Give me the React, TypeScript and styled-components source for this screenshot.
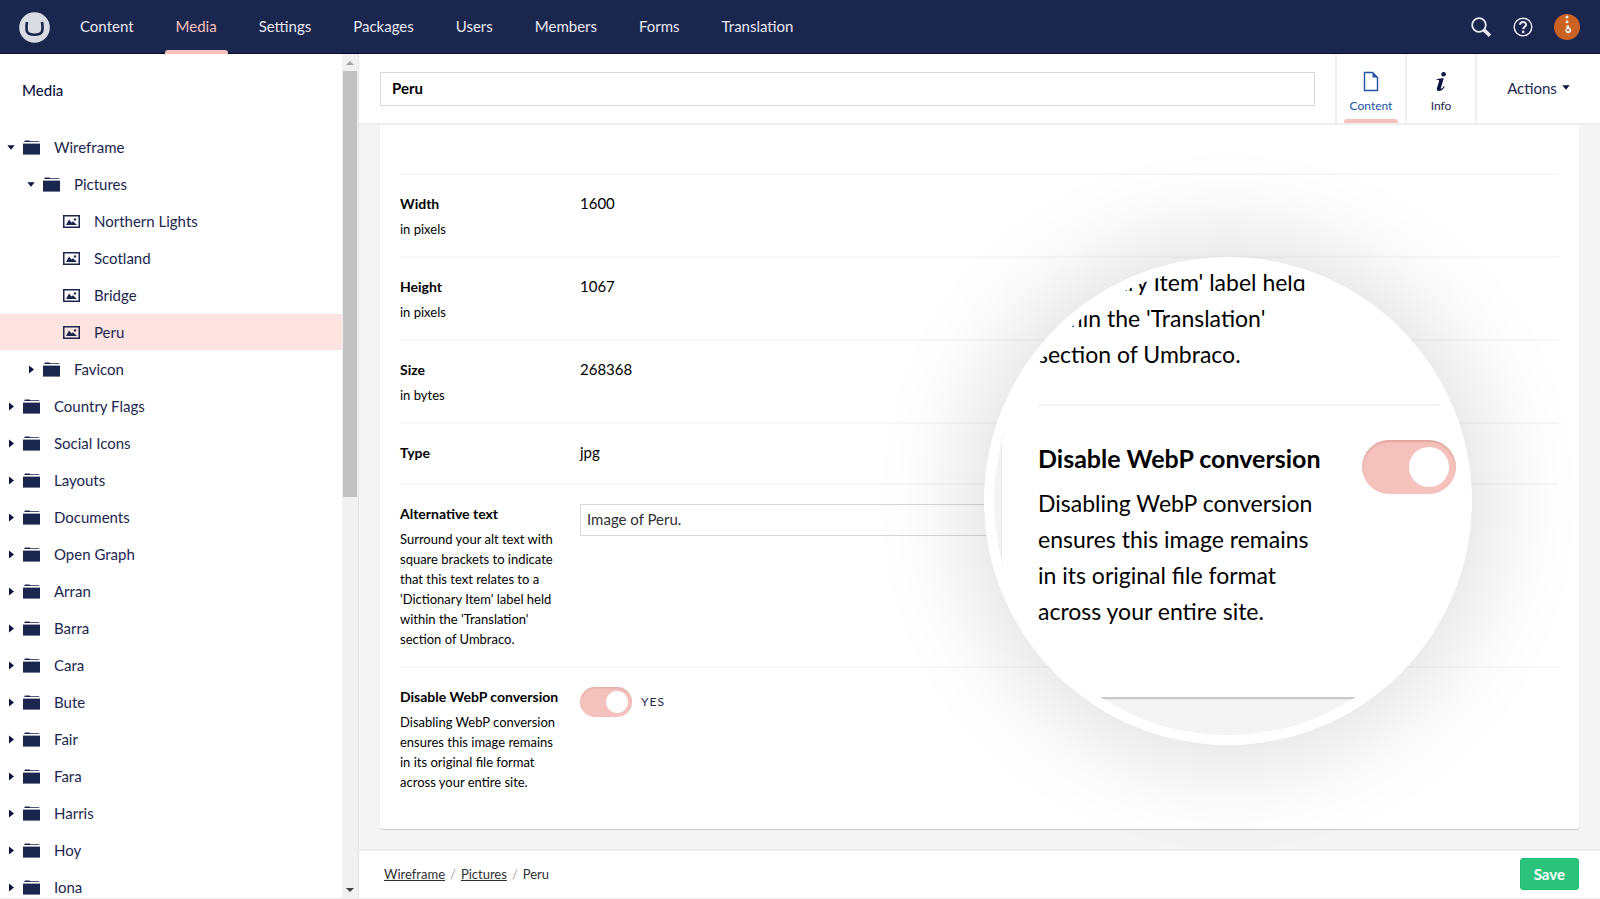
import React from "react";
import styled, { createGlobalStyle } from "styled-components";

const GlobalStyle = createGlobalStyle`
  *, *::before, *::after { box-sizing: border-box; }
  body {
    margin: 0;
    background: #f4f4f4;
    color: #000;
    font-family: Lato, "Liberation Sans", sans-serif;
    font-size: 15px;
    line-height: 20px;
  }
  button, input { font: inherit; }
  svg { flex: none; }
`;

const navy = "#1b264f";
const rose = "#f5c1bc";

const Shell = styled.div`
  display: flex;
  flex-direction: column;
  height: 100vh;
  overflow: hidden;
  border-bottom: 1px solid #ededed;
`;

const TopBar = styled.header`
  display: flex;
  flex: none;
  align-items: center;
  height: 54px;
  padding: 0 20px 0 19px;
  background: ${navy};
  box-shadow: inset 0 -1px 0 #050b33;
`;

const LogoLink = styled.a`
  display: flex;
  margin-right: 19px;
`;

const Sections = styled.nav`
  display: flex;
  flex: 1;
  align-self: stretch;
  gap: 20px;
`;

const SectionLink = styled.a<{ $active?: boolean }>`
  display: flex;
  flex-direction: column;
  align-items: center;
  justify-content: space-between;
  padding-top: 1px;
  color: ${(p) => (p.$active ? rose : "#e6e8ef")};
  text-decoration: none;

  &::before { content: ""; }

  &::after {
    content: "";
    align-self: stretch;
    height: 4px;
    border-radius: 3px 3px 0 0;
    background: ${(p) => (p.$active ? rose : "transparent")};
  }
`;

const SectionName = styled.span`
  padding: 0 11px;
`;

const Tools = styled.div`
  display: flex;
  align-items: center;
  gap: 21px;
`;

const IconButton = styled.button`
  display: flex;
  padding: 0;
  border: 0;
  background: none;
  color: #e6e8ef;
`;

const Body = styled.div`
  display: flex;
  flex: 1;
  min-height: 0;
`;

const Sidebar = styled.aside`
  display: flex;
  flex: none;
  width: 359px;
  background: #fff;
  border-right: 1px solid #e4e4e6;
  color: ${navy};
`;

const TreePane = styled.div`
  flex: 1;
  overflow: hidden;
`;

const TreeTitle = styled.h2`
  margin: 0;
  padding: 26px 22px 29px;
  font-size: 15px;
  font-weight: 500;
  line-height: 20px;
  color: #0c1442;
`;

const Tree = styled.ul`
  margin: 0;
  padding: 0;
  list-style: none;
`;

const TreeRow = styled.li<{ $depth: number; $selected?: boolean }>`
  display: flex;
  align-items: center;
  height: 36px;
  margin-bottom: 1px;
  padding-left: ${(p) => 7 + p.$depth * 20}px;
  background: ${(p) => (p.$selected ? "#fee4e1" : "transparent")};
`;

const Caret = styled.span`
  display: flex;
  width: 16px;
`;

const TreeLink = styled.a`
  display: flex;
  align-items: center;
  gap: 14px;
  color: inherit;
  text-decoration: none;
`;

const Scrollbar = styled.div`
  display: flex;
  flex-direction: column;
  width: 16px;
  background: #f1f1f1;
`;

const ScrollArrow = styled.span`
  display: flex;
  flex: none;
  align-items: center;
  justify-content: center;
  height: 17px;
`;

const ScrollTrack = styled.div`
  flex: 1;
  padding: 0 1px;
`;

const ScrollThumb = styled.div`
  height: 52.6%;
  background: #c1c1c1;
`;

const Editor = styled.form`
  display: flex;
  flex: 1;
  flex-direction: column;
  min-width: 0;
`;

const EditorHeader = styled.div`
  display: flex;
  flex: none;
  align-items: center;
  height: 71px;
  padding-left: 21px;
  background: #fff;
  border-bottom: 2px solid #efeff0;
`;

const NameInput = styled.input`
  flex: 1;
  min-width: 0;
  height: 34px;
  margin-right: 20px;
  padding: 0 11px 2px;
  border: 1px solid #d8d7d9;
  background: #fff;
  color: #000;
  font-weight: 700;
`;

const TabButton = styled.button<{ $active?: boolean }>`
  display: flex;
  flex-direction: column;
  align-items: center;
  align-self: stretch;
  width: 70px;
  padding: 17px 0 0;
  border: 0;
  border-left: 2px solid #efeff0;
  background: none;
  color: ${(p) => (p.$active ? "#2152a3" : navy)};
  font-size: 12px;
  line-height: 20px;

  svg { margin-bottom: 4px; }

  &::after {
    content: "";
    width: 54px;
    height: 4px;
    margin-top: auto;
    border-radius: 3px 3px 0 0;
    background: ${(p) => (p.$active ? rose : "transparent")};
  }
`;

const ActionsButton = styled.button`
  display: flex;
  align-items: center;
  align-self: stretch;
  justify-content: center;
  gap: 5px;
  width: 125px;
  padding: 0 0 2px;
  border: 0;
  border-left: 2px solid #efeff0;
  background: none;
  color: ${navy};
`;

const Canvas = styled.main`
  flex: 1;
  min-height: 0;
  overflow: hidden;
  padding: 0 21px 20px;
`;

const Card = styled.section`
  height: 100%;
  padding: 48px 20px 0;
  background: #fff;
  border-radius: 0 0 3px 3px;
  box-shadow: 0 1px 1px rgba(0, 0, 0, 0.18);
`;

const Property = styled.div`
  display: grid;
  grid-template-columns: 160px 1fr;
  column-gap: 20px;
  padding: 18px 0 17px;
  border-top: 2px solid #f8f8f8;
`;

const PropertyLabel = styled.label`
  display: block;
  font-size: 14px;
  font-weight: 700;
  line-height: 22px;
  white-space: nowrap;
`;

const Description = styled.p`
  margin: 4px 0 0;
  font-size: 13px;
  line-height: 20px;
`;

const Value = styled.div`
  min-height: 24px;
  line-height: 20px;
`;

const Control = styled.div`
  padding-top: 1px;
`;

const TextInput = styled.input`
  display: block;
  width: 100%;
  max-width: 800px;
  height: 32px;
  padding: 0 6px 2px;
  border: 1px solid #d8d7d9;
  background: #fff;
  color: #303033;
`;

const ToggleLine = styled.div`
  display: flex;
  align-items: center;
  gap: 9px;
  color: ${navy};
  font-size: 12px;
  letter-spacing: 1px;
`;

const Toggle = styled.input<{ $large?: boolean }>`
  display: flex;
  flex: none;
  align-items: center;
  justify-content: flex-end;
  appearance: none;
  width: ${(p) => (p.$large ? 94 : 52)}px;
  height: ${(p) => (p.$large ? 54 : 30)}px;
  margin: 0;
  padding: 0 ${(p) => (p.$large ? 7 : 4)}px 0 0;
  border-radius: 27px;
  background: ${rose};
  box-shadow: inset 0 ${(p) => (p.$large ? 2 : 1)}px 2px rgba(170, 90, 80, 0.25);

  &::before {
    content: "";
    width: ${(p) => (p.$large ? 40 : 22)}px;
    height: ${(p) => (p.$large ? 40 : 22)}px;
    border-radius: 50%;
    background: #fff;
  }
`;

const EditorFooter = styled.footer`
  display: flex;
  flex: none;
  align-items: center;
  justify-content: space-between;
  height: 49px;
  padding: 0 21px 1px 25px;
  background: #fff;
  border-top: 2px solid #ededee;
`;

const Breadcrumbs = styled.nav`
  display: flex;
  gap: 5px;
  color: #303033;
  font-size: 13px;

  a { color: inherit; }
  i { color: #a5a5a8; font-style: normal; }
`;

const SaveButton = styled.button`
  height: 32px;
  padding: 0 13px;
  border: 1px solid #1fbd72;
  border-radius: 3px;
  background: #2bc37c;
  color: #fff;
  font-weight: 700;
`;

/* Round magnifier floating over the editor, showing the last property enlarged. */
const Lens = styled.div`
  position: absolute;
  top: 257px;
  right: 128px;
  width: 488px;
  height: 488px;
  border-radius: 50%;
  background: #fff;
  padding: 10px;
  box-shadow: 0 0 100px 16px rgba(0, 0, 0, 0.13);
`;

const LensGlass = styled.div`
  width: 100%;
  height: 100%;
  overflow: hidden;
  border-radius: 50%;
  padding-left: 8px;
  background: #f4f4f4;
`;

const LensCard = styled.div`
  height: 433px;
  margin: -3px -20px 0 0;
  padding: 0 42px 0 36px;
  background: #fff;
  box-shadow: 0 2px 1px #c9c9cb, 0 0 2px #e2e2e3;
`;

const LensText = styled.p`
  margin: 0;
  font-size: 23px;
  line-height: 36px;
  white-space: nowrap;
`;

const LensProperty = styled.div`
  display: flex;
  gap: 41px;
  margin-top: 32px;
  padding-top: 34px;
  border-top: 2px solid #f5f5f6;
`;

const LensLabel = styled.label`
  display: block;
  margin: 0 0 9px;
  font-size: 25px;
  font-weight: 700;
  line-height: 36px;
  white-space: nowrap;
`;

const Logo = () => (
  <svg width="31" height="31" viewBox="0 0 31 31">
    <circle cx="15.500" cy="15.500" r="15.300" fill="#d9dbe3" />
    <path
      d="M8 10C7.300 14 7.200 17 8 19.500C9 22.300 12 22.700 15.500 22.700C19 22.700 22 22.300 23 19.500C23.800 17 23.700 14 23 10"
      fill="none"
      stroke={navy}
      strokeWidth="2.600"
    />
  </svg>
);

const SearchIcon = () => (
  <svg width="21" height="21" viewBox="0 0 21 21" fill="none" stroke="currentColor">
    <circle cx="8" cy="8" r="6.800" strokeWidth="1.800" />
    <path d="M13 13L19 18.800" strokeWidth="3.600" />
  </svg>
);

const HelpIcon = () => (
  <svg width="20" height="20" viewBox="0 0 20 20" fill="none" stroke="currentColor">
    <circle cx="10" cy="10" r="8.800" strokeWidth="1.500" />
    <path d="M7 7.800C7.100 4 13.300 4.200 13.100 7.700C13 9.700 10.200 9.900 10.200 12.300" strokeWidth="2" />
    <circle cx="10.200" cy="14.900" r="1.300" fill="currentColor" stroke="none" />
  </svg>
);

const Avatar = () => (
  <svg width="26" height="26" viewBox="0 0 26 26">
    <circle cx="13" cy="13" r="13" fill="#cb6222" />
    <g fill="#ece5e0">
      <circle cx="13" cy="3" r="1.500" />
      <circle cx="13" cy="7.800" r="1.500" />
      <path d="M12.600 11.200h2.200l.7 2.200c1.900.9 2.400 3.400 1 4.900-1.500 1.600-4.300 1-5-.9-.4-1.200 0-2.500.8-3.300z" />
    </g>
    <circle cx="14" cy="16" r="1.300" fill="#b9805c" />
  </svg>
);

const FolderIcon = () => (
  <svg width="17" height="15" viewBox="0 0 17 15" fill={navy}>
    <path d="M1.200 1.800L2 .4h4.500L7.300 1.200h9v.7H1.200z" />
    <path d="M0 3.600h17v11H0z" />
  </svg>
);

const PictureIcon = () => (
  <svg width="17" height="13" viewBox="0 0 17 13" fill={navy}>
    <path fillRule="evenodd" d="M0 0h17v13H0zM1.500 1.500v10h14v-10z" />
    <path d="M3 10L6 4.500L8.500 7.500L10 6.200L14 10z" />
    <circle cx="12" cy="4.400" r="1.200" />
  </svg>
);

const DownCaret = () => (
  <svg width="8" height="5" viewBox="0 0 8 5" fill="#0c1442">
    <path d="M.3.300h7.400L4 4.700z" />
  </svg>
);

const RightCaret = () => (
  <svg width="9" height="9" viewBox="0 0 9 9" fill="#0c1442">
    <path d="M2 .5v8L7 4.500z" />
  </svg>
);

const DocumentIcon = () => (
  <svg width="16" height="21" viewBox="0 0 16 21">
    <path d="M1.500 1.500H9.500L14.500 6.500V19.500H1.500z" fill="none" stroke="#2152a3" strokeWidth="1.400" />
    <path d="M9.500 1L15 6.500H9.500z" fill="#2152a3" />
  </svg>
);

const InfoIcon = () => (
  <svg width="12" height="21" viewBox="0 0 12 21" fill="#0c1442">
    <circle cx="8.600" cy="3.300" r="2.300" />
    <path d="M1.700 8.300Q5 7.400 8.800 7.300L5.800 17Q5.600 18 6.500 17.600Q7.600 17 8.900 15L9.700 15.500Q7.200 20 3.700 20Q1.300 19.900 1.900 17.300L4.200 9.800Q4.400 9 3.600 9H1.700z" />
  </svg>
);

type Node = { name: string; depth: number; kind: "open" | "closed" | "image"; selected?: boolean };

const nodes: Node[] = [
  { name: "Wireframe", depth: 0, kind: "open" },
  { name: "Pictures", depth: 1, kind: "open" },
  { name: "Northern Lights", depth: 2, kind: "image" },
  { name: "Scotland", depth: 2, kind: "image" },
  { name: "Bridge", depth: 2, kind: "image" },
  { name: "Peru", depth: 2, kind: "image", selected: true },
  { name: "Favicon", depth: 1, kind: "closed" },
  ...[
    "Country Flags", "Social Icons", "Layouts", "Documents", "Open Graph", "Arran", "Barra",
    "Cara", "Bute", "Fair", "Fara", "Harris", "Hoy", "Iona",
  ].map((name): Node => ({ name, depth: 0, kind: "closed" })),
];

const sections = ["Content", "Media", "Settings", "Packages", "Users", "Members", "Forms", "Translation"];

const facts = [
  { name: "Width", hint: "in pixels", value: "1600" },
  { name: "Height", hint: "in pixels", value: "1067" },
  { name: "Size", hint: "in bytes", value: "268368" },
  { name: "Type", hint: "", value: "jpg" },
];

export default function App() {
  return (
    <Shell>
      <GlobalStyle />
      <TopBar>
        <LogoLink href="#" aria-label="Home"><Logo /></LogoLink>
        <Sections>
          {sections.map((s) => (
            <SectionLink key={s} href="#" $active={s === "Media"}>
              <SectionName>{s}</SectionName>
            </SectionLink>
          ))}
        </Sections>
        <Tools>
          <IconButton type="button" aria-label="Search"><SearchIcon /></IconButton>
          <IconButton type="button" aria-label="Help"><HelpIcon /></IconButton>
          <IconButton type="button" aria-label="Profile"><Avatar /></IconButton>
        </Tools>
      </TopBar>

      <Body>
        <Sidebar>
          <TreePane>
            <TreeTitle>Media</TreeTitle>
            <Tree>
              {nodes.map((n) => (
                <TreeRow key={n.name} $depth={n.depth} $selected={n.selected}>
                  <Caret>
                    {n.kind === "open" && <DownCaret />}
                    {n.kind === "closed" && <RightCaret />}
                  </Caret>
                  <TreeLink href="#">
                    {n.kind === "image" ? <PictureIcon /> : <FolderIcon />}
                    {n.name}
                  </TreeLink>
                </TreeRow>
              ))}
            </Tree>
          </TreePane>
          <Scrollbar aria-hidden="true">
            <ScrollArrow>
              <svg width="8" height="4" viewBox="0 0 8 4"><path d="M0 4L4 0L8 4z" fill="#a3a3a3" /></svg>
            </ScrollArrow>
            <ScrollTrack><ScrollThumb /></ScrollTrack>
            <ScrollArrow>
              <svg width="8" height="4" viewBox="0 0 8 4"><path d="M0 0L4 4L8 0z" fill="#404040" /></svg>
            </ScrollArrow>
          </Scrollbar>
        </Sidebar>

        <Editor onSubmit={(e) => e.preventDefault()}>
          <EditorHeader>
            <NameInput aria-label="Name" defaultValue="Peru" />
            <TabButton type="button" $active><DocumentIcon />Content</TabButton>
            <TabButton type="button"><InfoIcon />Info</TabButton>
            <ActionsButton type="button">Actions <DownCaret /></ActionsButton>
          </EditorHeader>

          <Canvas>
            <Card>
              {facts.map((f) => (
                <Property key={f.name}>
                  <div>
                    <PropertyLabel as="div">{f.name}</PropertyLabel>
                    {f.hint && <Description>{f.hint}</Description>}
                  </div>
                  <Value>{f.value}</Value>
                </Property>
              ))}
              <Property>
                <div>
                  <PropertyLabel htmlFor="alt-text">Alternative text</PropertyLabel>
                  <Description>
                    Surround your alt text with square brackets to indicate that this text relates to a
                    'Dictionary Item' label held within the 'Translation' section of Umbraco.
                  </Description>
                </div>
                <Control>
                  <TextInput id="alt-text" defaultValue="Image of Peru." />
                </Control>
              </Property>
              <Property>
                <div>
                  <PropertyLabel htmlFor="disable-webp">Disable WebP conversion</PropertyLabel>
                  <Description>
                    Disabling WebP conversion ensures this image remains in its original file format
                    across your entire site.
                  </Description>
                </div>
                <Control>
                  <ToggleLine>
                    <Toggle id="disable-webp" type="checkbox" defaultChecked />
                    YES
                  </ToggleLine>
                </Control>
              </Property>
            </Card>
          </Canvas>

          <EditorFooter>
            <Breadcrumbs aria-label="Breadcrumb">
              <a href="#">Wireframe</a><i>/</i><a href="#">Pictures</a><i>/</i><span>Peru</span>
            </Breadcrumbs>
            <SaveButton type="submit">Save</SaveButton>
          </EditorFooter>
        </Editor>
      </Body>

      <Lens>
        <LensGlass>
          <LensCard>
            <LensText>
              'Dictionary Item' label held<br />
              within the 'Translation'<br />
              section of Umbraco.
            </LensText>
            <LensProperty>
              <div>
                <LensLabel htmlFor="lens-webp">Disable WebP conversion</LensLabel>
                <LensText>
                  Disabling WebP conversion<br />
                  ensures this image remains<br />
                  in its original file format<br />
                  across your entire site.
                </LensText>
              </div>
              <Toggle id="lens-webp" type="checkbox" defaultChecked $large />
            </LensProperty>
          </LensCard>
        </LensGlass>
      </Lens>
    </Shell>
  );
}
